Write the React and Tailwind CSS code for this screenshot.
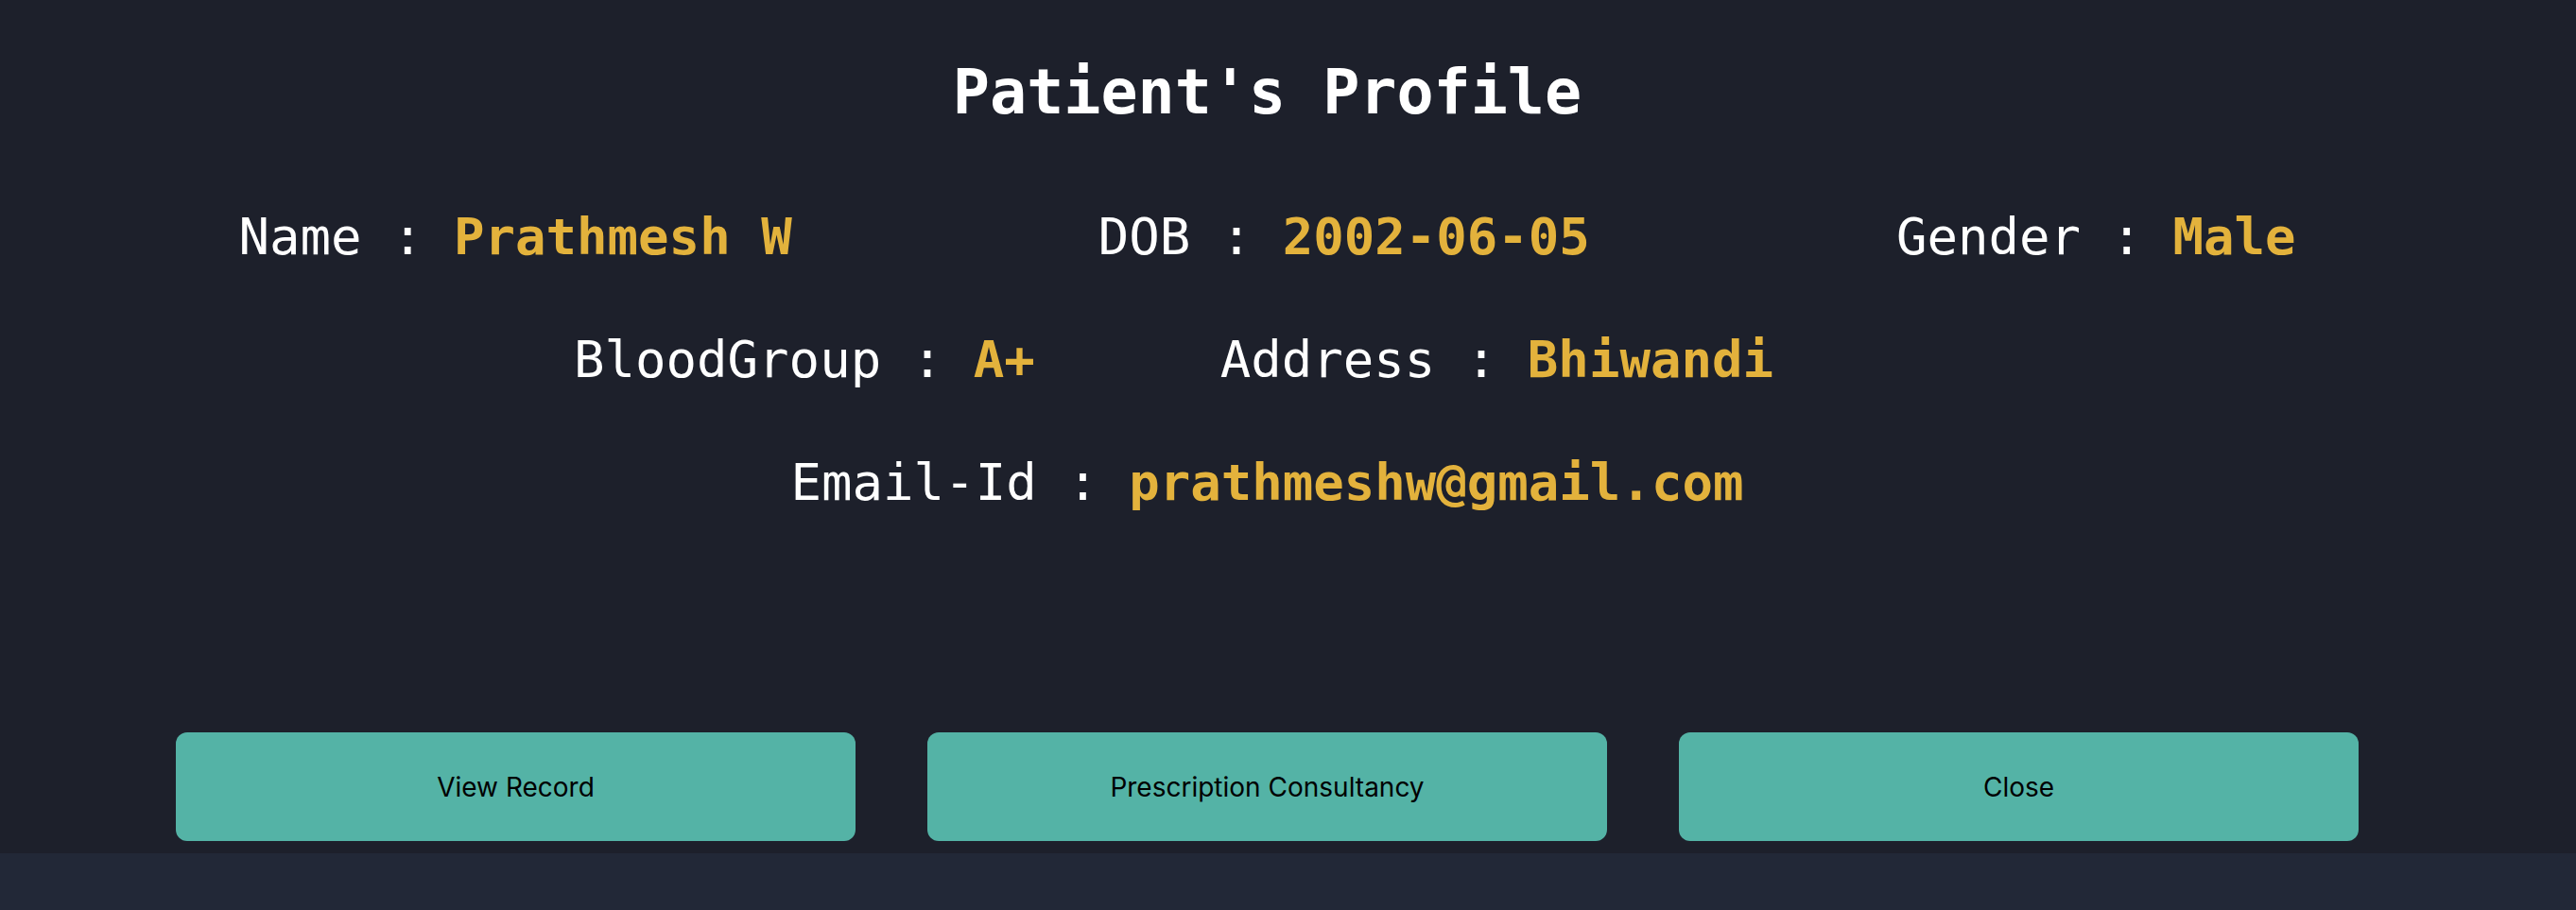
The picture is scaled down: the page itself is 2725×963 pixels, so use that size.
import React from 'react';

const mono = "font-['DejaVu_Sans_Mono',monospace]";

const Field = ({ label, value }) => (
  <div className="whitespace-nowrap">
    <span className="text-white">{label} : </span>
    <span className="font-bold text-[#e3b23c]">{value}</span>
  </div>
);

const ActionButton = ({ children }) => (
  <button className="h-[115px] w-[719px] rounded-[12px] bg-[#54b3a6] font-['Inter',sans-serif] text-[28px] text-black">
    {children}
  </button>
);

export default function App() {
  return (
    <div className="flex min-h-[963px] flex-col bg-[#222837]">
      <div className="h-[903px] bg-[#1d202b]">
        <div className={`w-[2681px] ${mono}`}>
          {/* Title */}
          <h1 className="pt-[65px] text-center text-[65px] font-bold leading-none text-white">
            Patient's Profile
          </h1>

          {/* Details */}
          <div className="mt-[94px] flex flex-col gap-[76px] text-[54px] leading-none">
            <div className="flex justify-center gap-[324px]">
              <Field label="Name" value="Prathmesh W" />
              <Field label="DOB" value="2002-06-05" />
              <Field label="Gender" value="Male" />
            </div>
            <div className="flex justify-center gap-[196px] pr-[198px]">
              <Field label="BloodGroup" value="A+" />
              <Field label="Address" value="Bhiwandi" />
            </div>
            <div className="flex justify-center">
              <Field label="Email-Id" value="prathmeshw@gmail.com" />
            </div>
          </div>

          {/* Actions */}
          <div className="mt-[237px] flex justify-center gap-[76px]">
            <ActionButton>View Record</ActionButton>
            <ActionButton>Prescription Consultancy</ActionButton>
            <ActionButton>Close</ActionButton>
          </div>
        </div>
      </div>
      <div className="flex-1" />
    </div>
  );
}
